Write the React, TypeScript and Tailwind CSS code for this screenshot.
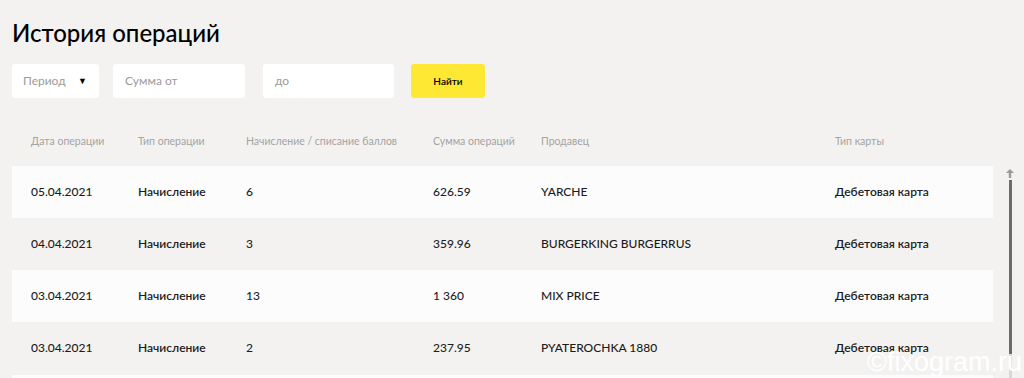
const rows = [
  { date: '05.04.2021', type: 'Начисление', points: '6', sum: '626.59', seller: 'YARCHE', card: 'Дебетовая карта' },
  { date: '04.04.2021', type: 'Начисление', points: '3', sum: '359.96', seller: 'BURGERKING BURGERRUS', card: 'Дебетовая карта' },
  { date: '03.04.2021', type: 'Начисление', points: '13', sum: '1 360', seller: 'MIX PRICE', card: 'Дебетовая карта' },
  { date: '03.04.2021', type: 'Начисление', points: '2', sum: '237.95', seller: 'PYATEROCHKA 1880', card: 'Дебетовая карта' },
];

function App() {
  return (
    <div
      className="relative h-[378px] w-[1024px] overflow-hidden bg-[#f3f2f0] text-[#1c1c1c]"
      style={{ fontFamily: 'Lato, "Noto Sans", sans-serif' }}
    >
      <div className="flex flex-col pl-3 pt-[18px]">
        <h1 className="text-[24px] font-medium leading-[30px] text-black">История операций</h1>

        <div className="mt-4 flex items-center text-[12px]">
          <div className="flex h-[34px] w-[87px] items-center justify-between rounded-[3px] bg-white pl-[11px] pr-[12px] text-[#9b9b9b]">
            <span>Период</span>
            <span className="text-[9px] text-black">▼</span>
          </div>
          <div className="ml-[14px] flex h-[34px] w-[132px] items-center rounded-[3px] bg-white pl-[12px] text-[#9b9b9b]">
            Сумма от
          </div>
          <div className="ml-[18px] flex h-[34px] w-[131px] items-center rounded-[3px] bg-white pl-[12px] text-[#9b9b9b]">
            до
          </div>
          <button
            type="button"
            className="ml-[17px] flex h-[34px] w-[74px] items-center justify-center rounded-[3px] bg-[#ffe833] text-[10px] font-semibold text-black"
          >
            Найти
          </button>
        </div>

        <div className="mt-[25px] flex">
          <div className="flex w-[981px] shrink-0 flex-col">
            <div className="flex h-[38px] items-center pl-[19px] text-[10.5px] text-[#a3a3a3]">
              <div className="w-[107px]">Дата операции</div>
              <div className="w-[108px]">Тип операции</div>
              <div className="w-[187px]">Начисление / списание баллов</div>
              <div className="w-[108px]">Сумма операций</div>
              <div className="w-[294px]">Продавец</div>
              <div className="flex-1">Тип карты</div>
            </div>
            <div className="mt-[5px] flex flex-col">
              {rows.map((r, i) => (
                <div
                  key={i}
                  className={`flex h-[52px] items-center pl-[19px] text-[12px] font-medium ${i % 2 === 0 ? 'bg-[#fcfcfc]' : 'bg-[#f3f2f0]'}`}
                >
                  <div className="w-[107px]">{r.date}</div>
                  <div className="w-[108px] font-semibold">{r.type}</div>
                  <div className="w-[187px]">{r.points}</div>
                  <div className="w-[108px]">{r.sum}</div>
                  <div className="w-[294px]">{r.seller}</div>
                  <div className="flex-1 font-semibold">{r.card}</div>
                </div>
              ))}
              <div className="mt-px h-[52px] bg-[#fcfcfc]" />
            </div>
          </div>
          <div className="mt-[46px] ml-[12px] flex w-[10px] shrink-0 flex-col items-center">
            <svg width="8" height="9" viewBox="0 0 8 9" className="text-[#9a9a9a]">
              <path d="M4 0 L8 4 L5.2 4 L5.2 9 L2.8 9 L2.8 4 L0 4 Z" fill="currentColor" />
            </svg>
            <div className="mt-[2px] h-[174px] w-[3px] bg-[#6b6b6b]" />
            <div className="h-[40px] w-[3px] bg-[#d8d8d8]" />
          </div>
        </div>
      </div>

      <div
        className="absolute bottom-[-4px] right-[2px] text-[27px] leading-[40px] text-white"
        style={{ fontFamily: '"Liberation Sans", sans-serif' }}
      >
        ©fixogram.ru
      </div>
    </div>
  );
}

export default App;
